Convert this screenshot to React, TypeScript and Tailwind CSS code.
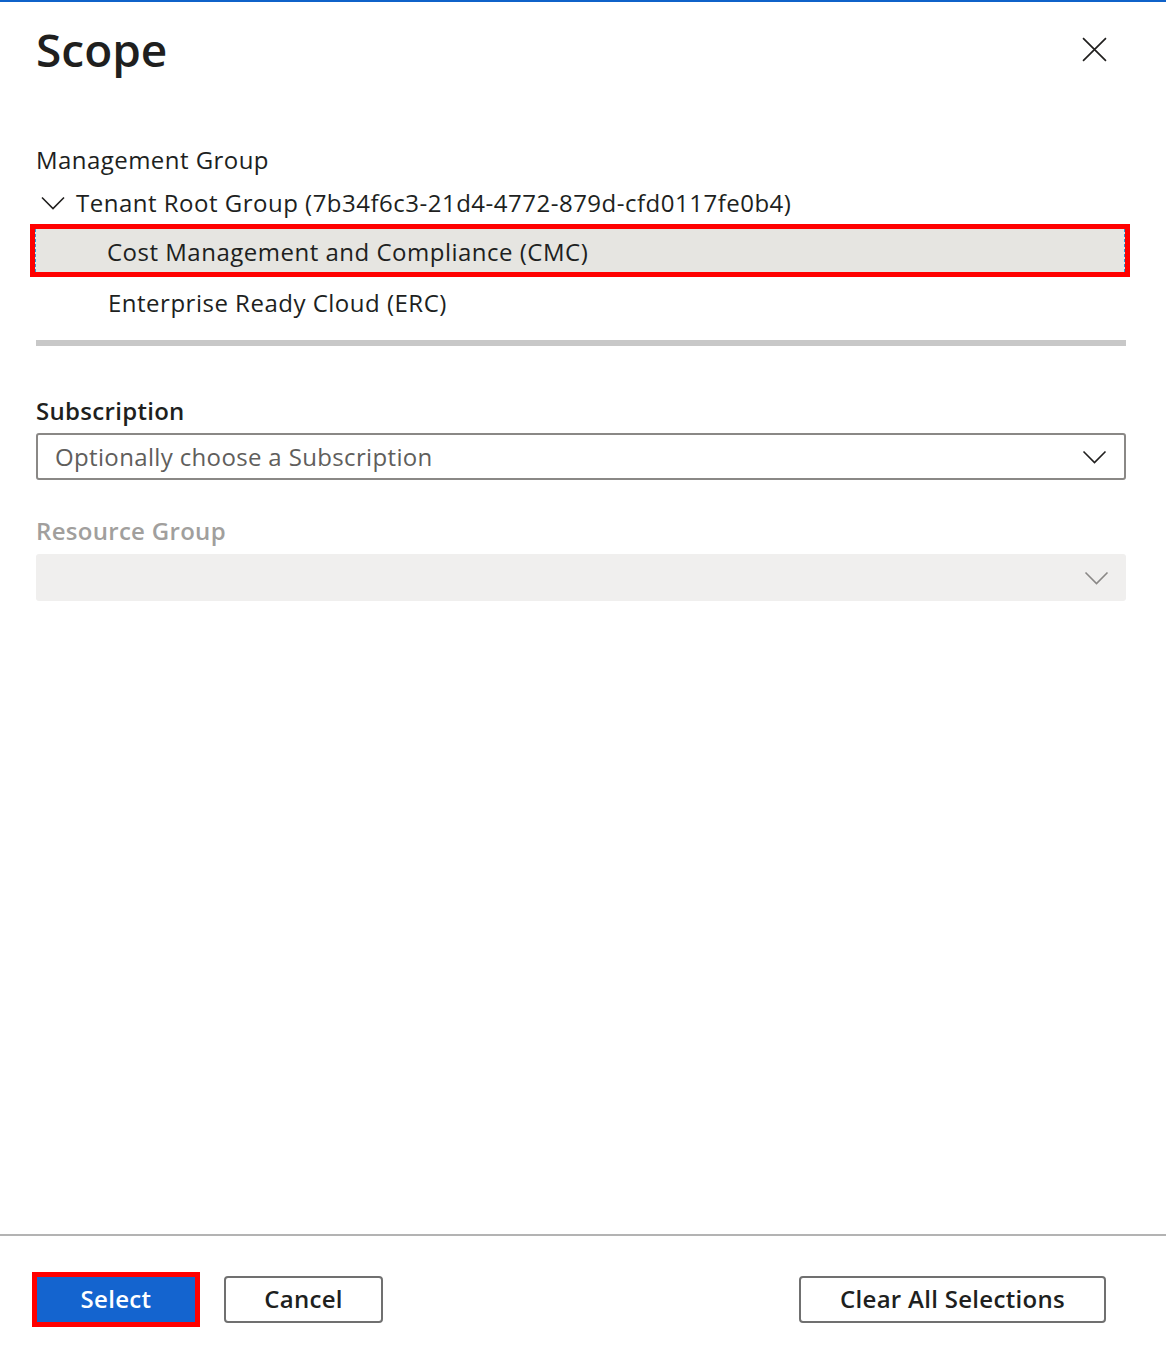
import React from "react";

const font = { fontFamily: '"Open Sans", "Noto Sans", sans-serif' };

const Chevron = ({ className }: { className?: string }) => (
  <svg viewBox="0 0 24 14" className={className} fill="none" stroke="currentColor" strokeWidth="1.6">
    <path d="M1 1.5 L12 12.5 L23 1.5" />
  </svg>
);

const ScopePanel = () => {
  return (
    <div className="flex flex-col h-[1364px] w-[1166px] bg-white border-t-2 border-[#0f62c9] text-[#201f1e]" style={font}>
      <div className="flex items-start justify-between pl-[36px] pr-[59px] pt-[15px]">
        <h1 className="text-[46px] font-semibold leading-[64px]">Scope</h1>
        <svg viewBox="0 0 24 24" className="w-[25px] h-[25px] mt-[20px]" fill="none" stroke="#201f1e" strokeWidth="1.6">
          <path d="M1 1 L23 23 M23 1 L1 23" />
        </svg>
      </div>

      <div className="flex-1 pl-[36px] pr-[40px] pt-[63px]">
        <div className="text-[24px] leading-[32px] tracking-[0.45px]">Management Group</div>
        <div className="flex items-center h-[48px] pl-[5px] pt-[6px] text-[24px] tracking-[0.5px]">
          <Chevron className="w-[24px] h-[14px] text-[#201f1e]" />
          <span className="ml-[11px]">Tenant Root Group (7b34f6c3-21d4-4772-879d-cfd0117fe0b4)</span>
        </div>
        <div className="-ml-[6px] -mr-[4px] border-[5px] border-[#ff0000]">
          <div className="flex items-center h-[43px] bg-[#e6e5e1] border-x border-dashed border-[#2b9bd8] pl-[71px] pt-[3px] text-[24px] tracking-[0.5px]">
            Cost Management and Compliance (CMC)
          </div>
        </div>
        <div className="flex items-center h-[52px] pl-[72px] text-[24px] tracking-[0.5px]">Enterprise Ready Cloud (ERC)</div>
        <div className="h-[6px] bg-[#c8c8c8] mt-[11px]" />

        <div className="mt-[49px] text-[24px] font-semibold leading-[32px] tracking-[0.3px]">Subscription</div>
        <div className="mt-[6px] flex items-center justify-between h-[47px] border-2 border-[#8a8886] rounded-[3px] pl-[17px] pr-[17px]">
          <span className="text-[24px] text-[#605e5c] tracking-[0.35px]">Optionally choose a Subscription</span>
          <Chevron className="w-[25px] h-[14px] text-[#201f1e]" />
        </div>

        <div className="mt-[35px] text-[24px] font-semibold leading-[32px] text-[#a19f9d] tracking-[0.3px]">Resource Group</div>
        <div className="mt-[7px] flex items-center justify-end h-[47px] bg-[#f0efee] rounded-[3px] pr-[17px]">
          <Chevron className="w-[25px] h-[14px] text-[#8a8886]" />
        </div>
      </div>

      <div className="h-[130px] border-t-2 border-[#b3b3b3] flex items-center justify-between pl-[32px] pr-[60px] pb-[2px]">
        <div className="flex items-center gap-[24px]">
          <div className="border-[5px] border-[#ff0000]">
            <button className="w-[158px] h-[45px] bg-[#1464cf] text-white text-[24px] font-semibold tracking-[0.3px]">Select</button>
          </div>
          <button className="w-[159px] h-[47px] border-2 border-[#707070] rounded-[4px] text-[24px] font-semibold tracking-[0.3px]">Cancel</button>
        </div>
        <button className="w-[307px] h-[47px] border-2 border-[#707070] rounded-[4px] text-[24px] font-semibold tracking-[0.3px]">Clear All Selections</button>
      </div>
    </div>
  );
};

export default function App() {
  return <ScopePanel />;
}
